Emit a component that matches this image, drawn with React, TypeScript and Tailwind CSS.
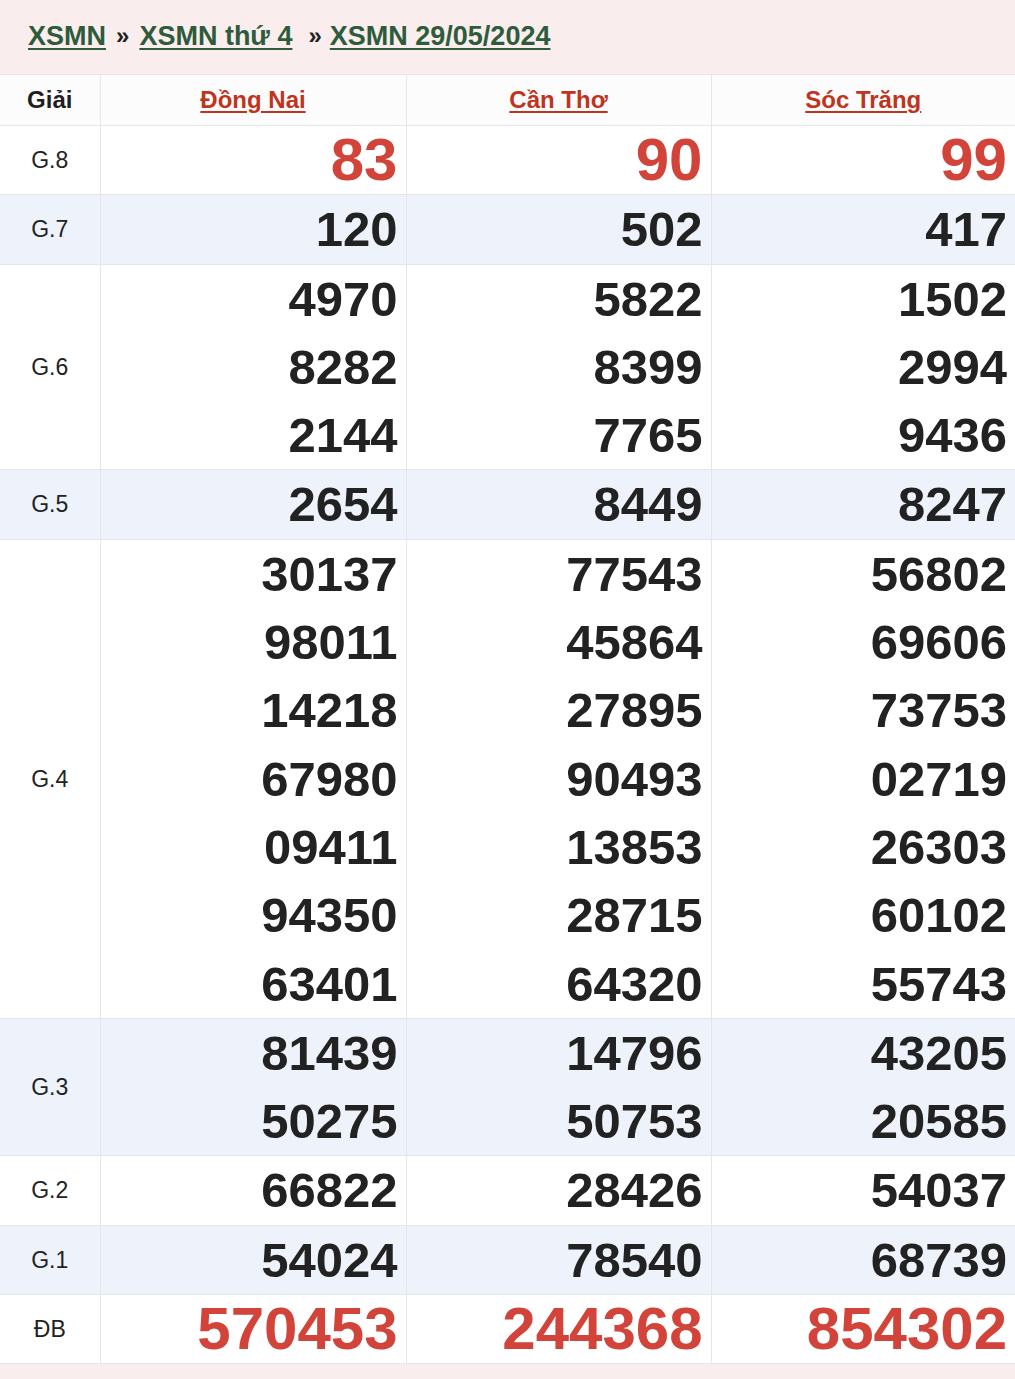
import React from "react";

const provinces = ["Đồng Nai", "Cần Thơ", "Sóc Trăng"];

type Prize = { label: string; values: string[][]; red?: boolean; stripe?: boolean };

const prizes: Prize[] = [
  { label: "G.8", values: [["83"], ["90"], ["99"]], red: true },
  { label: "G.7", values: [["120"], ["502"], ["417"]], stripe: true },
  {
    label: "G.6",
    values: [
      ["4970", "8282", "2144"],
      ["5822", "8399", "7765"],
      ["1502", "2994", "9436"],
    ],
  },
  { label: "G.5", values: [["2654"], ["8449"], ["8247"]], stripe: true },
  {
    label: "G.4",
    values: [
      ["30137", "98011", "14218", "67980", "09411", "94350", "63401"],
      ["77543", "45864", "27895", "90493", "13853", "28715", "64320"],
      ["56802", "69606", "73753", "02719", "26303", "60102", "55743"],
    ],
  },
  {
    label: "G.3",
    values: [
      ["81439", "50275"],
      ["14796", "50753"],
      ["43205", "20585"],
    ],
    stripe: true,
  },
  { label: "G.2", values: [["66822"], ["28426"], ["54037"]] },
  { label: "G.1", values: [["54024"], ["78540"], ["68739"]], stripe: true },
  { label: "ĐB", values: [["570453"], ["244368"], ["854302"]], red: true },
];

const App = () => {
  return (
    <div
      className="w-[1015px] min-h-[1379px] bg-[#f9eded] text-[#222]"
      style={{ fontFamily: '"Liberation Sans", Arial, sans-serif' }}
    >
      <div className="h-[74px] flex items-center pl-[28px] pb-[2px] text-[27px] font-bold text-[#2d5b3c]">
        <a href="#" className="underline underline-offset-[3px] decoration-2">
          XSMN
        </a>
        <span className="mx-[10px] text-[#222] text-[24px]">»</span>
        <a href="#" className="underline underline-offset-[3px] decoration-2">
          XSMN thứ 4
        </a>
        <span className="ml-[16px] mr-[8px] text-[#222] text-[24px]">»</span>
        <a href="#" className="underline underline-offset-[3px] decoration-2">
          XSMN 29/05/2024
        </a>
      </div>

      <table className="w-[1015px] table-fixed border-collapse bg-white">
        <colgroup>
          <col className="w-[100px]" />
          <col className="w-[306px]" />
          <col className="w-[305px]" />
          <col className="w-[304px]" />
        </colgroup>
        <thead>
          <tr className="h-[51px] bg-[#fcfcfc]">
            <th className="border border-[#e4e6ea] border-l-0 text-[24px] font-bold text-[#1f1f1f]">
              Giải
            </th>
            {provinces.map((p) => (
              <th
                key={p}
                className="border border-[#e4e6ea] last:border-r-0 text-[24px] font-bold"
              >
                <a
                  href="#"
                  className="text-[#c0341d] underline underline-offset-[3px] decoration-2"
                >
                  {p}
                </a>
              </th>
            ))}
          </tr>
        </thead>
        <tbody>
          {prizes.map((row) => (
            <tr
              key={row.label}
              className={row.stripe ? "bg-[#eef2fa]" : "bg-white"}
            >
              <td className="border border-[#e4e6ea] border-l-0 text-center text-[23px] text-[#222]">
                {row.label}
              </td>
              {row.values.map((col, i) => (
                <td
                  key={i}
                  className="border border-[#e4e6ea] last:border-r-0 text-right pr-[8px] align-middle"
                >
                  {col.map((n, j) => (
                    <div
                      key={j}
                      className={
                        row.red
                          ? "leading-[68.3px] text-[60px] font-bold text-[#d2433a]"
                          : "leading-[68.3px] text-[49px] font-bold text-[#222]"
                      }
                    >
                      {n}
                    </div>
                  ))}
                </td>
              ))}
            </tr>
          ))}
        </tbody>
      </table>
    </div>
  );
};

export default App;
